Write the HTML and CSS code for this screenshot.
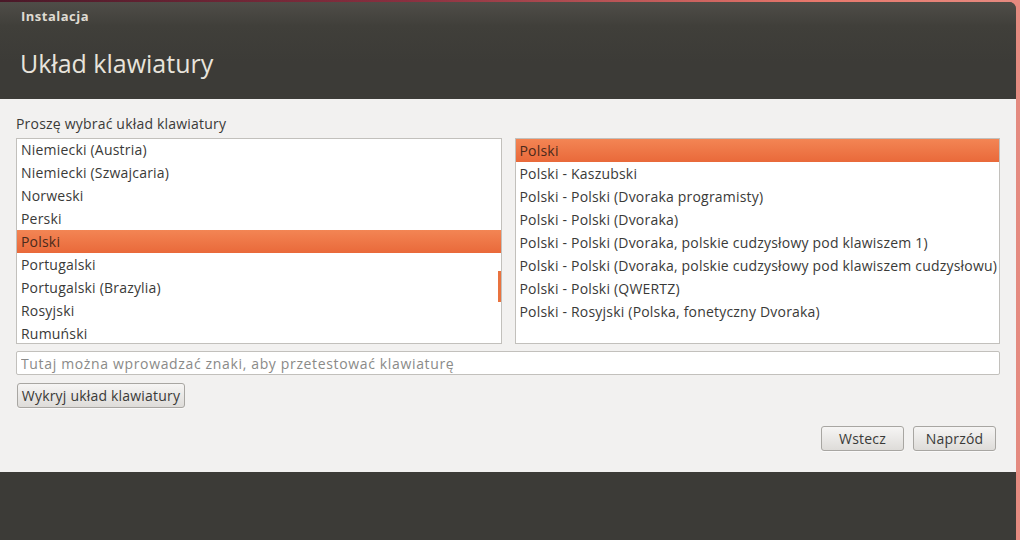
FILE: index.html
```html
<!DOCTYPE html>
<html>
<head>
  <title>Instalacja</title>
  <link rel="stylesheet" href="styles.css">
</head>
<body>

  <div class="desktop-strip"></div>
  <div class="window">
    <div class="header">
      <div class="window-title">Instalacja</div>
      <h1 class="page-title">Układ klawiatury</h1>
    </div>

    <div class="content">
      <div class="label">Proszę wybrać układ klawiatury</div>
      <div class="lists">
        <div class="list list-left">
          <div class="row">Niemiecki (Austria)</div>
          <div class="row">Niemiecki (Szwajcaria)</div>
          <div class="row">Norweski</div>
          <div class="row">Perski</div>
          <div class="row selected">Polski</div>
          <div class="row">Portugalski</div>
          <div class="row">Portugalski (Brazylia)</div>
          <div class="row">Rosyjski</div>
          <div class="row">Rumuński</div>
          <div class="scroll-thumb"></div>
        </div>
        <div class="list list-right">
          <div class="row selected">Polski</div>
          <div class="row">Polski - Kaszubski</div>
          <div class="row">Polski - Polski (Dvoraka programisty)</div>
          <div class="row">Polski - Polski (Dvoraka)</div>
          <div class="row">Polski - Polski (Dvoraka, polskie cudzysłowy pod klawiszem 1)</div>
          <div class="row">Polski - Polski (Dvoraka, polskie cudzysłowy pod klawiszem cudzysłowu)</div>
          <div class="row">Polski - Polski (QWERTZ)</div>
          <div class="row">Polski - Rosyjski (Polska, fonetyczny Dvoraka)</div>
        </div>
      </div>

      <input class="test-input" type="text" placeholder="Tutaj można wprowadzać znaki, aby przetestować klawiaturę">

      <button class="btn detect">Wykryj układ klawiatury</button>

      <div class="nav">
        <button class="btn nav-btn">Wstecz</button>
        <button class="btn nav-btn">Naprzód</button>
      </div>
    </div>

    <div class="footer"></div>
  </div>

</body>
</html>
```

FILE: styles.css
```css
body {
  margin: 0;
  width: 1020px;
  height: 540px;
  overflow: hidden;
  background: linear-gradient(to right, #4a1828, #8a3040 40%, #e8786c 80%, #e58a80);
  font-family: "Open Sans", "Noto Sans", sans-serif;
  font-size: 14px;
  letter-spacing: 0.2px;
  color: #3a3a38;
}

.desktop-strip {
  height: 2px;
}

.window {
  width: 1016px;
  height: 538px;
  background-color: #3c3b37;
  border-top-right-radius: 7px;
  display: flex;
  flex-direction: column;
  overflow: hidden;
}

/* Dark title area */
.header {
  height: 97px;
  background: linear-gradient(to bottom, #4f4d48 0px, #403f3a 24px, #3c3b37 60px);
  padding-left: 20px;
  box-sizing: border-box;
}

.window-title {
  padding-top: 5px;
  padding-left: 1px;
  font-size: 13px;
  font-weight: bold;
  letter-spacing: 0.5px;
  color: #dfdbd2;
  line-height: 18px;
}

.page-title {
  margin: 0;
  padding-top: 23px;
  font-size: 25px;
  font-weight: normal;
  letter-spacing: 0;
  color: #e8e4dc;
  line-height: 30px;
}

.content {
  height: 373px;
  background-color: #f2f1f0;
  padding: 16px 16px 0 16px;
  box-sizing: border-box;
  display: flex;
  flex-direction: column;
}

.label {
  line-height: 18px;
  height: 23px;
}

.lists {
  display: flex;
  gap: 13px;
}

.list {
  position: relative;
  height: 206px;
  background-color: #fff;
  border: 1px solid #c2c0bc;
  box-sizing: border-box;
  overflow: hidden;
}

.list-left {
  width: 486px;
}

.list-right {
  width: 486px;
}

.row {
  height: 23px;
  line-height: 23px;
  padding-left: 4px;
  white-space: nowrap;
}

.selected {
  background: linear-gradient(to bottom, #f38554, #e9693a);
  color: #4a2a1c;
}

.list-left .row:first-child {
  margin-top: -1px;
}

.scroll-thumb {
  position: absolute;
  right: 0;
  top: 132px;
  width: 3px;
  height: 31px;
  background-color: #e9733f;
}

.test-input {
  margin-top: 7px;
  width: 984px;
  height: 24px;
  box-sizing: border-box;
  border: 1px solid #c2c0bc;
  border-radius: 2px;
  background-color: #fff;
  padding: 0 4px;
  font-family: inherit;
  font-size: 14px;
  letter-spacing: 0.65px;
  color: #3c3c3c;
}

.test-input::placeholder {
  color: #8a8a88;
}

.btn {
  font-family: inherit;
  font-size: 14px;
  letter-spacing: 0.2px;
  color: #3a3a38;
  background: linear-gradient(to bottom, #f6f5f4, #dedcd9);
  border: 1px solid #a8a6a2;
  border-radius: 3px;
  box-shadow: 0 1px 0 rgba(255, 255, 255, 0.6);
  height: 25px;
  padding: 0 2px;
  cursor: pointer;
}

.detect {
  align-self: flex-start;
  margin-top: 8px;
  margin-left: 1px;
  width: 168px;
}

.nav {
  display: flex;
  justify-content: flex-end;
  gap: 9px;
  margin-top: 18px;
  padding-right: 4px;
}

.nav-btn {
  width: 83px;
}

.footer {
  flex: 1;
  background-color: #3c3b37;
}
```
